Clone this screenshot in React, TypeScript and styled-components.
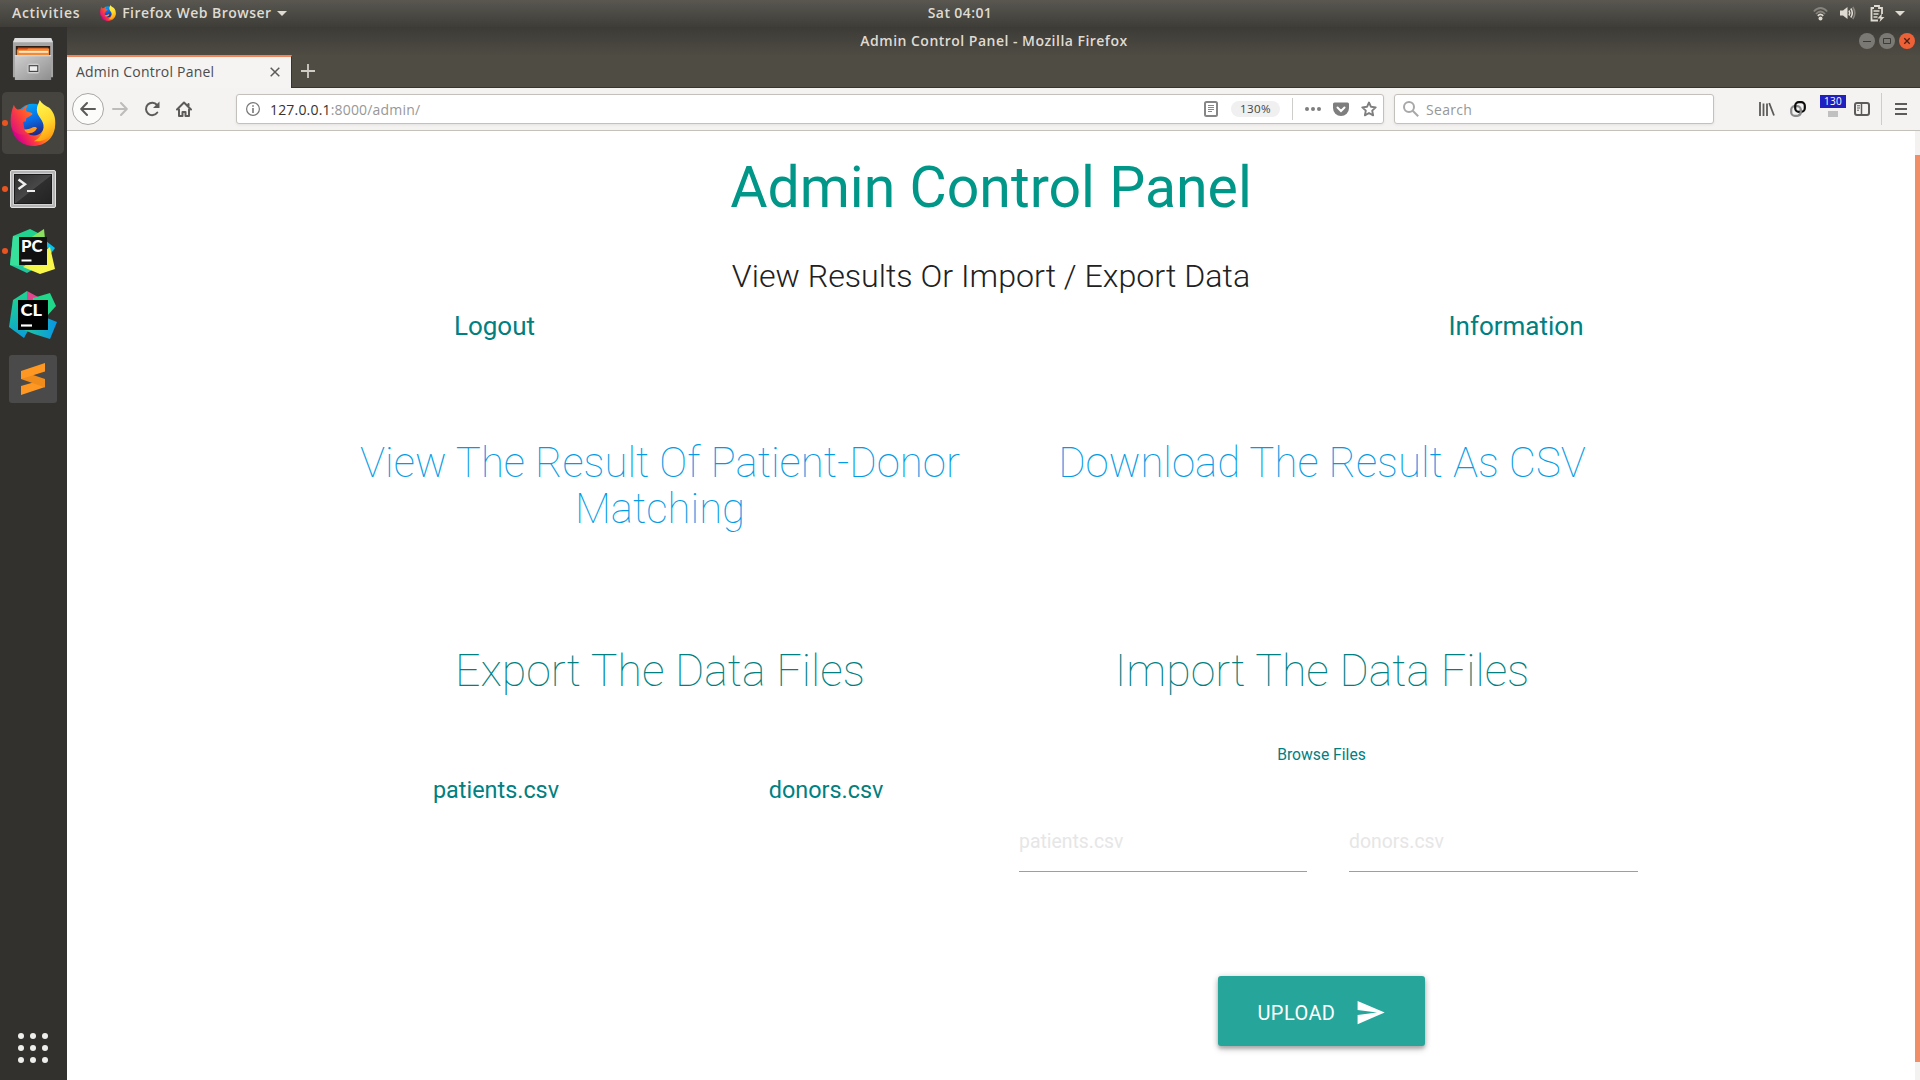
import React from "react";
import styled, { createGlobalStyle } from "styled-components";

const GlobalStyle = createGlobalStyle`
  *, *::before, *::after { box-sizing: border-box; }
  html, body { margin: 0; padding: 0; overflow: hidden; background: #fff; }
`;

const uiFont = `"Open Sans", "Noto Sans", sans-serif`;

const Desktop = styled.div`
  width: 1920px;
  height: 1080px;
  display: flex;
  flex-direction: column;
  font-family: ${uiFont};
  overflow: hidden;
`;

const TopBar = styled.header`
  height: 27px;
  flex: none;
  display: grid;
  grid-template-columns: 1fr auto 1fr;
  align-items: center;
  background: linear-gradient(#595750, #3e3d38);
  color: #dfdbd2;
  font-size: 14px;
  font-weight: 600;
  line-height: 24px;
  padding-bottom: 1px;
`;

const TopGroup = styled.div<{ $end?: boolean }>`
  display: flex;
  align-items: center;
  justify-content: ${(p) => (p.$end ? "flex-end" : "flex-start")};
  padding: ${(p) => (p.$end ? "0 15px 0 0" : "0 0 0 12px")};
`;

const Label = styled.span<{ $track?: number; $left?: number }>`
  white-space: nowrap;
  letter-spacing: ${(p) => p.$track ?? 0}px;
  margin-left: ${(p) => p.$left ?? 0}px;
`;

const Icon = styled.svg<{ $left?: number }>`
  display: block;
  flex: none;
  margin-left: ${(p) => p.$left ?? 0}px;
`;

const Workspace = styled.div`
  flex: 1;
  min-height: 0;
  display: flex;
`;

const Dock = styled.nav`
  width: 67px;
  flex: none;
  display: flex;
  flex-direction: column;
  background: #33312d;
`;

const DockItem = styled.div<{ $active?: boolean; $drop?: number }>`
  height: 64px;
  display: grid;
  grid-template-columns: 8px 46px;
  align-items: center;
  justify-items: center;
  margin: 0 3px 0 2px;
  padding-top: ${(p) => p.$drop ?? 0}px;
  border-radius: 5px;
  background: ${(p) => (p.$active ? "#46443f" : "transparent")};
  background-clip: padding-box;
  border-top: 1px solid transparent;
  border-bottom: 1px solid transparent;
`;

const Dot = styled.i<{ $on?: boolean }>`
  width: 6px;
  height: 6px;
  border-radius: 50%;
  justify-self: start;
  background: ${(p) => (p.$on ? "#e95420" : "transparent")};
`;

const AppGrid = styled.div`
  margin: auto 0 17px 18px;
  display: grid;
  grid-template-columns: repeat(3, 6px);
  gap: 6px;
`;

const GridDot = styled.i`
  width: 6px;
  height: 6px;
  border-radius: 50%;
  background: #eeeeec;
`;

const BrowserWindow = styled.section`
  flex: 1;
  min-width: 0;
  display: flex;
  flex-direction: column;
`;

const TitleBar = styled.div`
  height: 28px;
  flex: none;
  display: grid;
  grid-template-columns: 1fr auto 1fr;
  align-items: center;
  background: linear-gradient(#3c3b37, #4e4b43);
  color: #dfdbd2;
  font-size: 14px;
  font-weight: 600;
  line-height: 24px;
`;

const WindowTitle = styled.span`
  padding: 0 0 1px 1px;
  letter-spacing: 0.48px;
  white-space: nowrap;
`;

const WindowButtons = styled.div`
  display: flex;
  justify-content: flex-end;
  gap: 4px;
  padding-right: 5px;
`;

const TabStrip = styled.div`
  height: 33px;
  flex: none;
  display: flex;
  background: #4f4c44;
  box-shadow: inset 0 -1px #36342f;
`;

const Tab = styled.div`
  width: 225px;
  display: flex;
  align-items: center;
  background: #f5f4f2;
  border-top: 2px solid #f0855d;
  border-right: 1px solid #36342f;
  padding: 0 11px 2px 9px;
  justify-content: space-between;
  color: #4c4c4c;
  font-size: 14px;
`;

const NewTab = styled.div`
  padding: 9px 0 0 9px;
`;

const Toolbar = styled.div`
  height: 43px;
  flex: none;
  display: flex;
  align-items: center;
  background: #f4f3f1;
  border-bottom: 1px solid #c4c1bd;
  padding: 0 13px 0 5px;
`;

const BackButton = styled.div`
  width: 32px;
  height: 32px;
  border-radius: 50%;
  border: 1px solid #a9a7a4;
  background: #fcfcfb;
  display: grid;
  place-items: center;
`;

const Field = styled.div<{ $width: number; $left: number }>`
  width: ${(p) => p.$width}px;
  height: 30px;
  margin-left: ${(p) => p.$left}px;
  display: flex;
  align-items: center;
  background: #fff;
  border: 1px solid #c4c1bd;
  border-radius: 3px;
  box-shadow: 0 1px 3px rgba(0, 0, 0, 0.07);
  color: #979797;
  font-size: 14px;
`;

const Host = styled.b`
  font-weight: 400;
  color: #333;
`;

const Spacer = styled.div`
  flex: 1;
`;

const ZoomPill = styled.div`
  width: 49px;
  height: 16px;
  margin-left: 13px;
  border-radius: 8px;
  background: #f0f0f0;
  color: #444;
  font-size: 11.6px;
  line-height: 16px;
  letter-spacing: 0.4px;
  text-align: center;
`;

const Divider = styled.i<{ $height: number; $left: number }>`
  width: 1px;
  height: ${(p) => p.$height}px;
  margin-left: ${(p) => p.$left}px;
  background: #cfcdca;
`;

const ZoomBadge = styled.div`
  width: 26px;
  margin-left: 14px;
  display: grid;
  justify-items: center;
  gap: 3px;
  padding-bottom: 6px;
`;

const BadgeText = styled.span`
  width: 26px;
  height: 13px;
  background: #2020c0;
  color: #fff;
  font-size: 10px;
  line-height: 13px;
  letter-spacing: 0.2px;
  text-align: center;
`;

const BadgeBar = styled.i`
  width: 10px;
  height: 6px;
  background: #c0c0c0;
`;

const Viewport = styled.div`
  flex: 1;
  min-height: 0;
  display: flex;
  background: #fff;
`;

const ScrollTrack = styled.div`
  width: 5px;
  background: #f3f2f1;
  padding-top: 24px;
`;

const ScrollThumb = styled.div`
  height: 907px;
  background: #f18e68;
`;

const Page = styled.main`
  flex: 1;
  min-width: 0;
  display: flex;
  flex-direction: column;
  align-items: center;
  font-family: Roboto, sans-serif;
  white-space: nowrap;
`;

const PageTitle = styled.h1`
  margin: 25px 0 0;
  font-size: 57.2px;
  line-height: 64px;
  font-weight: 400;
  color: #009688;
`;

const Subtitle = styled.h2`
  margin: 38px 0 0;
  font-size: 32.2px;
  line-height: 36px;
  font-weight: 300;
  color: #212121;
`;

const Row = styled.div<{ $top: number; $height: number }>`
  width: 1324px;
  height: ${(p) => p.$height}px;
  margin-top: ${(p) => p.$top}px;
  display: grid;
  grid-template-columns: 1fr 1fr;
`;

const Column = styled.div`
  display: flex;
  flex-direction: column;
  align-items: center;
  text-align: center;
`;

const LinkRow = styled.div`
  width: 1324px;
  margin-top: 17px;
  display: flex;
  justify-content: space-between;
`;

const LinkCell = styled.div<{ $width: number }>`
  width: ${(p) => p.$width}px;
  text-align: center;
`;

const TextLink = styled.a<{ $size: number }>`
  font-size: ${(p) => p.$size}px;
  line-height: 30px;
  color: #008080;
`;

const ResultLink = styled.a`
  font-size: 41.95px;
  line-height: 46px;
  font-weight: 100;
  color: #039be5;
`;

const SectionTitle = styled.h3`
  margin: 0;
  font-size: 44.65px;
  line-height: 50px;
  font-weight: 100;
  color: #008080;
`;

const FileLinks = styled.div`
  width: 100%;
  margin-top: 79px;
  padding-left: 2px;
  display: grid;
  grid-template-columns: 1fr 1fr;
`;

const Browse = styled.label`
  margin: 49px 1px 0 0;
  font-size: 15.7px;
  line-height: 20px;
  color: #008080;
`;

const Inputs = styled.div`
  width: 100%;
  margin-top: 50px;
  padding: 0 15px 0 28px;
  display: grid;
  grid-template-columns: 288px 289px;
  justify-content: space-between;
`;

const FileField = styled.div`
  height: 57px;
  padding-top: 15px;
  border-bottom: 1px solid #9e9e9e;
  text-align: left;
  font-size: 19.4px;
  line-height: 24px;
  color: #e6e6e6;
`;

const UploadButton = styled.button`
  width: 207px;
  height: 70px;
  margin: 104px 2px 0 0;
  padding: 3px 39px 0 40px;
  display: flex;
  align-items: center;
  justify-content: space-between;
  border: 0;
  border-radius: 3px;
  background: #26a69a;
  color: #fff;
  font: 400 20px Roboto, sans-serif;
  letter-spacing: 0.4px;
  box-shadow: 0 3px 3px 0 rgba(0, 0, 0, 0.14), 0 4px 7px 0 rgba(0, 0, 0, 0.12), 0 1px 6px 0 rgba(0, 0, 0, 0.2);
`;

const FirefoxLogo = ({ size, left }: { size: number; left?: number }) => (
  <Icon $left={left} width={size} height={size} viewBox="0 0 48 48">
    <defs>
      <linearGradient id="fxBody" x1="0.95" y1="0.3" x2="0.1" y2="0.7">
        <stop offset="0" stopColor="#ffc41a" />
        <stop offset="0.35" stopColor="#ff8a16" />
        <stop offset="0.65" stopColor="#ff3a3f" />
        <stop offset="1" stopColor="#d6008c" />
      </linearGradient>
      <linearGradient id="fxGlobe" x1="0.3" y1="0" x2="0.6" y2="1">
        <stop offset="0" stopColor="#00a9f8" />
        <stop offset="0.45" stopColor="#0a6be6" />
        <stop offset="1" stopColor="#2b1160" />
      </linearGradient>
      <linearGradient id="fxTail" x1="0.3" y1="0" x2="0.6" y2="1">
        <stop offset="0" stopColor="#fff64f" />
        <stop offset="0.55" stopColor="#ffd92e" />
        <stop offset="1" stopColor="#ff980e" />
      </linearGradient>
      <linearGradient id="fxHead" x1="1" y1="0.1" x2="0" y2="0.8">
        <stop offset="0" stopColor="#ff8a1c" />
        <stop offset="0.5" stopColor="#ff4a34" />
        <stop offset="1" stopColor="#e0107c" />
      </linearGradient>
    </defs>
    <circle cx="24" cy="23" r="19" fill="url(#fxGlobe)" />
    <path d="M3 15C-2 29 4 47 24 48c14 0 24-10 23-25l-11-3c2 9-3 17-11 17-5 0-9-3-10-7L12 14z" fill="url(#fxBody)" />
    <path d="M31 0c-1 4-3 6-3 10 0 8 8 11 7 19-1 6-4 11-10 14 12 1 20-6 22-16 1-8-1-14-6-19-4-2-8-4-10-8z" fill="url(#fxTail)" />
    <path d="M4 5c1 3 2 4 4 5l5-.5c1-2 3-3.500 5.500-4-1.500 2-2 4-1.500 6 1.500 1.500 5.500 1 6.500 3-1 2-4.500 3-6.500 4.500l-.5 3.500c-3 0-5 2-4.500 5C14 32 20 31 23 29c2-1 4-1 5 .5-1 3-4 5-7 5C14 38 4 36 1 27 0 20 1 12 4 5z" fill="url(#fxHead)" />
    <path d="M15 31c3 0 6-1 8-2s4-1 5 .500c-2 3.500-5 5-8 5-2 0-4-1-5-3.500z" fill="#ff9a1e" />
  </Icon>
);

const FilesIcon = () => (
  <Icon width="42" height="44" viewBox="0 0 44 46">
    <defs>
      <linearGradient id="cab" x1="0" y1="0" x2="1" y2="1">
        <stop offset="0" stopColor="#cfcfcf" />
        <stop offset="1" stopColor="#8e8e8e" />
      </linearGradient>
    </defs>
    <path d="M3 1h38l2 5v36H1V6z" fill="#a6a6a6" />
    <path d="M3 1h38l2 4.500H1z" fill="#dedede" />
    <path d="M4 9.500h36v10H4z" fill="#2c1d14" />
    <path d="M6 11h32v4H6z" fill="#cc4a16" />
    <path d="M5 13h11l1-1h22v7H5z" fill="#f08a37" />
    <path d="M7 14.500h31v2H7z" fill="#fde9c8" />
    <path d="M3 19h38v26H3z" fill="url(#cab)" />
    <path d="M3 19h38v1H3z" fill="#e4e4e4" />
    <rect x="16" y="28" width="12.500" height="10" rx="2" fill="#d6d6d6" stroke="#bdbdbd" />
    <rect x="18" y="30" width="9" height="6" fill="#eee" stroke="#454545" strokeWidth="1.200" />
  </Icon>
);

const TerminalIcon = () => (
  <Icon width="46" height="38" viewBox="0 0 46 38">
    <defs>
      <linearGradient id="termGlass" x1="0" y1="0" x2="1" y2="1">
        <stop offset="0" stopColor="#303030" />
        <stop offset="0.500" stopColor="#484848" />
        <stop offset="0.520" stopColor="#2e2e2e" />
        <stop offset="1" stopColor="#232323" />
      </linearGradient>
    </defs>
    <rect x="0.500" y="0.500" width="45" height="37" rx="1.500" fill="#b4b4b4" stroke="#e2e2e2" />
    <rect x="3" y="3" width="40" height="32" fill="#d0d0d0" />
    <rect x="4" y="4" width="38" height="30" fill="#1b1b1b" />
    <rect x="5" y="5" width="36" height="28" fill="url(#termGlass)" />
    <path d="M8.500 9.500l6.500 4.800-6.500 4.700" fill="none" stroke="#eee" strokeWidth="2.400" />
    <path d="M17 21h8" stroke="#eee" strokeWidth="2" />
  </Icon>
);

const LogoText = styled.text`
  font-family: Lato, sans-serif;
  font-weight: 900;
  font-size: 16px;
  fill: #fff;
`;

const PyCharmIcon = () => (
  <Icon width="46" height="46" viewBox="0 0 46 46">
    <defs>
      <linearGradient id="pcGreen" x1="0" y1="0" x2="0.300" y2="1">
        <stop offset="0" stopColor="#21d789" />
        <stop offset="1" stopColor="#23c5a0" />
      </linearGradient>
      <linearGradient id="pcYellow" x1="0" y1="0" x2="1" y2="1">
        <stop offset="0" stopColor="#8fe060" />
        <stop offset="0.500" stopColor="#f5f64a" />
        <stop offset="1" stopColor="#fcf84a" />
      </linearGradient>
    </defs>
    <path d="M3 8L20 1l10 5 2 30-15 9L0 37z" fill="url(#pcGreen)" />
    <path d="M3 8l8 1-2 29-9-1z" fill="#37e09b" />
    <path d="M34 1l1 10-18 1z" fill="#8be05f" />
    <path d="M36 13l9 7-6 8z" fill="#07c3f2" />
    <path d="M13 39l27-20 5 22-15 5z" fill="url(#pcYellow)" />
    <rect x="9" y="9" width="28" height="28" fill="#111" />
    <LogoText x="11" y="24" textLength="21.500" lengthAdjust="spacingAndGlyphs">PC</LogoText>
    <path d="M11.500 32.500h10" stroke="#fff" strokeWidth="2" />
  </Icon>
);

const CLionIcon = () => (
  <Icon width="48" height="48" viewBox="0 0 48 48">
    <defs>
      <linearGradient id="clLeft" x1="0.300" y1="0" x2="0.500" y2="1">
        <stop offset="0" stopColor="#21d789" />
        <stop offset="1" stopColor="#0b9fd6" />
      </linearGradient>
      <linearGradient id="clBlue" x1="0" y1="0" x2="1" y2="0">
        <stop offset="0" stopColor="#22c99a" />
        <stop offset="1" stopColor="#0795e6" />
      </linearGradient>
    </defs>
    <path d="M4 9L18 0l3 36-6 11L0 36z" fill="url(#clLeft)" />
    <path d="M18 0l13 7-5 5H18z" fill="#e0478f" />
    <path d="M24 7l17-5 6 13-9 10H24z" fill="#21d789" />
    <path d="M15 39l23-12 10 4-7 17-16-5z" fill="url(#clBlue)" />
    <rect x="9" y="9" width="30" height="30" fill="#000" />
    <LogoText x="11.500" y="25" textLength="21.500" lengthAdjust="spacingAndGlyphs">CL</LogoText>
    <path d="M12 34.500h11" stroke="#fff" strokeWidth="2.200" />
  </Icon>
);

const SublimeIcon = () => (
  <Icon width="48" height="48" viewBox="0 0 48 48">
    <rect width="48" height="48" rx="3" fill="#4a4a4a" />
    <path d="M36 24L12 31v9l24-8z" fill="#ff9822" />
    <path d="M12 16v8l24 8.500V24z" fill="#f08c1c" />
    <path d="M36 8L12 16v8l24-7.500z" fill="#ff9822" />
  </Icon>
);

const stroke = { fill: "none", stroke: "#5c5b59", strokeWidth: 2, strokeLinecap: "round", strokeLinejoin: "round" } as const;

export default function App() {
  return (
    <Desktop>
      <GlobalStyle />
      <TopBar>
        <TopGroup>
          <Label $track={0.68}>Activities</Label>
          <FirefoxLogo size={16} left={20} />
          <Label $left={6} $track={0.48}>Firefox Web Browser</Label>
          <Icon $left={5} width="10" height="5" viewBox="0 0 10 5"><path d="M0 0h10L5 5z" fill="#dfdbd2" /></Icon>
        </TopGroup>
        <Label $track={0.4}>Sat 04:01</Label>
        <TopGroup $end>
          <Icon width="15" height="15" viewBox="0 0 15 15" fill="none" strokeWidth="1.800">
            <path d="M0.800 5.500Q7.500-1.500 14.200 5.500" stroke="#85837c" />
            <path d="M3 8Q7.500 3 12 8" stroke="#85837c" />
            <path d="M4.800 9.800Q7.500 7 10.200 9.800" stroke="#dfdbd2" />
            <circle cx="7.500" cy="12.500" r="2" fill="#dfdbd2" />
          </Icon>
          <Icon $left={12} width="16" height="14" viewBox="0 0 16 14" fill="none" strokeWidth="1.600">
            <path d="M0 4.500h3L7.500 1v12L3 9.500H0z" fill="#dfdbd2" />
            <path d="M9 4.500q1.500 2.500 0 5M10.800 2.500q3 4.500 0 9" stroke="#dfdbd2" />
            <path d="M12.800 1q4 6 0 12" stroke="#85837c" />
          </Icon>
          <Icon $left={14} width="15" height="17" viewBox="0 0 15 17">
            <path d="M4 1h5v2h3v6M8 15.500H1.500V3H4" fill="none" stroke="#dfdbd2" strokeWidth="1.800" />
            <path d="M3.500 6h6M3.500 9h5M3.500 12h4" stroke="#dfdbd2" strokeWidth="1.600" />
            <path d="M12 8.500l-4.500 5h3L9.500 17l5-5h-3z" fill="#dfdbd2" />
          </Icon>
          <Icon $left={10} width="10" height="5" viewBox="0 0 10 5"><path d="M0 0h10L5 5z" fill="#dfdbd2" /></Icon>
        </TopGroup>
      </TopBar>
      <Workspace>
        <Dock>
          <DockItem><Dot /><FilesIcon /></DockItem>
          <DockItem $active><Dot $on /><FirefoxLogo size={46} /></DockItem>
          <DockItem $drop={3}><Dot $on /><TerminalIcon /></DockItem>
          <DockItem><Dot $on /><PyCharmIcon /></DockItem>
          <DockItem><Dot /><CLionIcon /></DockItem>
          <DockItem><Dot /><SublimeIcon /></DockItem>
          <AppGrid>{Array.from({ length: 9 }, (_, i) => <GridDot key={i} />)}</AppGrid>
        </Dock>
        <BrowserWindow>
          <TitleBar>
            <span />
            <WindowTitle>Admin Control Panel - Mozilla Firefox</WindowTitle>
            <WindowButtons>
              <Icon width="16" height="16" viewBox="0 0 16 16"><circle cx="8" cy="8" r="8" fill="#7b7974" /><path d="M4 8.500h8" stroke="#3c3b37" /></Icon>
              <Icon width="16" height="16" viewBox="0 0 16 16"><circle cx="8" cy="8" r="8" fill="#7b7974" /><path d="M4.500 5.500h7v5h-7z" fill="none" stroke="#3c3b37" /></Icon>
              <Icon width="16" height="16" viewBox="0 0 16 16"><circle cx="8" cy="8" r="8" fill="#ee6137" /><path d="M5.300 5.300l5.400 5.400M10.700 5.300l-5.400 5.400" stroke="#4a2014" strokeWidth="1.300" /></Icon>
            </WindowButtons>
          </TitleBar>
          <TabStrip>
            <Tab>
              <Label $track={0.2}>Admin Control Panel</Label>
              <Icon width="10" height="10" viewBox="0 0 10 10"><path d="M0.700 0.700l8.600 8.600M9.300 0.700L0.700 9.300" stroke="#5c5b59" strokeWidth="1.500" /></Icon>
            </Tab>
            <NewTab>
              <Icon width="14" height="14" viewBox="0 0 14 14"><path d="M7 0v14M0 7h14" stroke="#d0cdc6" strokeWidth="1.800" /></Icon>
            </NewTab>
          </TabStrip>
          <Toolbar>
            <BackButton><Icon width="16" height="16" viewBox="0 0 16 16" {...stroke}><path d="M15 8H1.500M7 2L1.200 8 7 14" /></Icon></BackButton>
            <Icon $left={8} width="16" height="16" viewBox="0 0 16 16" {...stroke} stroke="#bdbcba"><path d="M1 8h13.500M9 2l5.800 6L9 14" /></Icon>
            <Icon $left={16} width="16" height="16" viewBox="0 0 16 16" {...stroke}><path d="M13.300 11.500A6.200 6.200 0 1 1 13 4" /><path d="M15.500 0.500v6.500H9z" fill="#5c5b59" stroke="none" /></Icon>
            <Icon $left={16} width="16" height="16" viewBox="0 0 16 16" {...stroke}><path d="M1 8.500L8 1.500l7 7M3 8.500V15h3.500v-4h3v4H13V8.500M12.500 3v2" /></Icon>
            <Field $left={44} $width={1148}>
              <Icon $left={9} width="14" height="14" viewBox="0 0 14 14"><circle cx="7" cy="7" r="6.400" fill="none" stroke="#777" strokeWidth="1.200" /><path d="M7 6v5M7 3.200v1.600" stroke="#777" strokeWidth="1.600" /></Icon>
              <Label $left={10} $track={0.18}><Host>127.0.0.1</Host>:8000/admin/</Label>
              <Spacer />
              <Icon width="14" height="16" viewBox="0 0 14 16" fill="none"><rect x="1" y="1" width="12" height="14" rx="1.500" stroke="#868686" strokeWidth="2" /><path d="M4 4.500h6M4 6.500h6M4 8.500h6M4 10.500h4" stroke="#868686" /></Icon>
              <ZoomPill>130%</ZoomPill>
              <Divider $height={22} $left={12} />
              <Icon $left={12} width="16" height="4" viewBox="0 0 16 4" fill="#7e7e7e"><circle cx="2" cy="2" r="2" /><circle cx="8" cy="2" r="2" /><circle cx="14" cy="2" r="2" /></Icon>
              <Icon $left={12} width="16" height="15" viewBox="0 0 16 15"><path d="M1.500 0.500h13q1.500 0 1.500 1.500v4a8 8 0 0 1-16 0V2Q0 0.500 1.500 0.500z" fill="#7e7e7e" /><path d="M4.500 5.500L8 9l3.500-3.500" fill="none" stroke="#fff" strokeWidth="2" strokeLinecap="round" /></Icon>
              <Icon $left={12} width="16" height="16" viewBox="0 0 16 16"><path d="M8 1.500l2 4.300 4.700.6-3.500 3.200.9 4.700L8 12l-4.100 2.300.9-4.700L1.300 6.400 6 5.800z" fill="none" stroke="#7e7e7e" strokeWidth="1.900" strokeLinejoin="round" /></Icon>
              <Divider $height={0} $left={5} />
            </Field>
            <Field $left={10} $width={320}>
              <Icon $left={8} width="16" height="16" viewBox="0 0 16 16" fill="none" stroke="#a8a8a8" strokeWidth="2"><circle cx="6" cy="6" r="5" /><path d="M9.700 9.700l5.500 5.500" /></Icon>
              <Label $left={7} $track={0.3}>Search</Label>
            </Field>
            <Icon $left={45} width="16" height="14" viewBox="0 0 16 14" stroke="#5c5b59" strokeWidth="1.800"><path d="M1 0v14M4.500 1.500V14M8 1.500V14M10.200 1l4.800 12.500" /></Icon>
            <Icon $left={15} width="16" height="16" viewBox="0 0 16 16" fill="none" strokeWidth="2.200">
              <rect x="1.200" y="5.200" width="9.600" height="9.600" rx="3.600" stroke="#8a8a8e" />
              <rect x="5.200" y="1.200" width="9.600" height="9.600" rx="3.600" stroke="#0c0c0d" />
              <path d="M10.800 8.500v2q0 3-2.500 4" stroke="#8a8a8e" />
            </Icon>
            <ZoomBadge><BadgeText>130</BadgeText><BadgeBar /></ZoomBadge>
            <Icon $left={8} width="16" height="14" viewBox="0 0 16 14" fill="none" stroke="#5c5b59"><rect x="1" y="1" width="14" height="12" rx="2" strokeWidth="2" /><path d="M7.500 1v12" strokeWidth="1.500" /><path d="M3 3.800h3M3 6h3M3 8.200h2" /></Icon>
            <Divider $height={32} $left={11} />
            <Icon $left={13} width="12" height="12" viewBox="0 0 12 12" stroke="#5c5b59" strokeWidth="2"><path d="M0 1h12M0 6h12M0 11h12" /></Icon>
          </Toolbar>
          <Viewport>
            <Page>
              <PageTitle>Admin Control Panel</PageTitle>
              <Subtitle>View Results Or Import / Export Data</Subtitle>
              <LinkRow>
                <LinkCell $width={331}><TextLink $size={26}>Logout</TextLink></LinkCell>
                <LinkCell $width={274}><TextLink $size={26}>Information</TextLink></LinkCell>
              </LinkRow>
              <Row $top={99} $height={92}>
                <Column><ResultLink>View The Result Of Patient-Donor<br />Matching</ResultLink></Column>
                <Column><ResultLink>Download The Result As CSV</ResultLink></Column>
              </Row>
              <Row $top={114} $height={402}>
                <Column>
                  <SectionTitle>Export The Data Files</SectionTitle>
                  <FileLinks>
                    <TextLink $size={23.4}>patients.csv</TextLink>
                    <TextLink $size={23.4}>donors.csv</TextLink>
                  </FileLinks>
                </Column>
                <Column>
                  <SectionTitle>Import The Data Files</SectionTitle>
                  <Browse>Browse Files</Browse>
                  <Inputs>
                    <FileField>patients.csv</FileField>
                    <FileField>donors.csv</FileField>
                  </Inputs>
                  <UploadButton>
                    UPLOAD
                    <Icon width="31" height="31" viewBox="0 0 24 24"><path d="M2.010 21L23 12 2.010 3 2 10l15 2-15 2z" fill="#fff" /></Icon>
                  </UploadButton>
                </Column>
              </Row>
            </Page>
            <ScrollTrack><ScrollThumb /></ScrollTrack>
          </Viewport>
        </BrowserWindow>
      </Workspace>
    </Desktop>
  );
}
